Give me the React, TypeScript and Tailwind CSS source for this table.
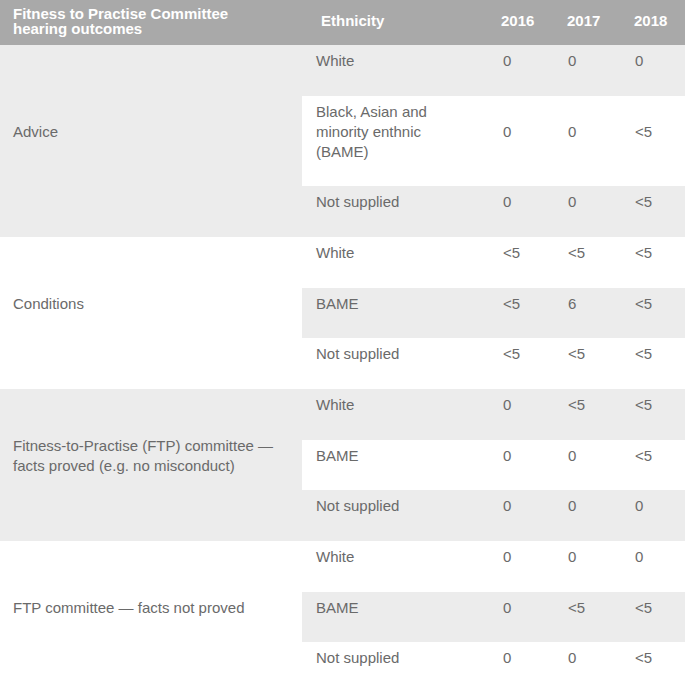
const groups = [
  {
    outcome: 'Advice',
    rows: [
      { ethnicity: 'White', values: ['0', '0', '0'] },
      { ethnicity: 'Black, Asian and minority enthnic (BAME)', values: ['0', '0', '<5'] },
      { ethnicity: 'Not supplied', values: ['0', '0', '<5'] },
    ],
  },
  {
    outcome: 'Conditions',
    rows: [
      { ethnicity: 'White', values: ['<5', '<5', '<5'] },
      { ethnicity: 'BAME', values: ['<5', '6', '<5'] },
      { ethnicity: 'Not supplied', values: ['<5', '<5', '<5'] },
    ],
  },
  {
    outcome: 'Fitness-to-Practise (FTP) committee — facts proved (e.g. no misconduct)',
    rows: [
      { ethnicity: 'White', values: ['0', '<5', '<5'] },
      { ethnicity: 'BAME', values: ['0', '0', '<5'] },
      { ethnicity: 'Not supplied', values: ['0', '0', '0'] },
    ],
  },
  {
    outcome: 'FTP committee — facts not proved',
    rows: [
      { ethnicity: 'White', values: ['0', '0', '0'] },
      { ethnicity: 'BAME', values: ['0', '<5', '<5'] },
      { ethnicity: 'Not supplied', values: ['0', '0', '<5'] },
    ],
  },
];

const cols = 'grid grid-cols-[302px_187px_65px_67px_64px]';
const cell = 'flex items-center pt-[6px] pb-[24.67px]';

const App = () => {
  return (
    <div
      className="w-[685px] bg-white text-[15px] leading-[20px] text-[#6a6a6a]"
      style={{ fontFamily: '"Liberation Sans", Arial, sans-serif' }}
    >
      {/* Header */}
      <div className={`${cols} h-[45px] bg-[#a9a9a9] font-bold leading-[15px] text-white`}>
        <div className="flex items-center pb-[4px] pl-[13px] pr-[40px]">
          Fitness to Practise Committee hearing outcomes
        </div>
        <div className="flex items-center pb-[4px] pl-[19px]">Ethnicity</div>
        <div className="flex items-center pb-[4px] pl-[12px]">2016</div>
        <div className="flex items-center pb-[4px] pl-[13px]">2017</div>
        <div className="flex items-center pb-[4px] pl-[13px]">2018</div>
      </div>

      {/* Body groups */}
      {groups.map((group, gi) => {
        const shaded = gi % 2 === 0;
        return (
          <div key={group.outcome} className={`${cols} ${shaded ? 'bg-[#ececec]' : 'bg-white'}`}>
            <div className={`${cell} row-span-3 pl-[13px] pr-[13px]`}>{group.outcome}</div>
            {group.rows.map((row, ri) => {
              const alt = ri === 1 ? (shaded ? 'bg-white' : 'bg-[#ececec]') : '';
              return [
                <div key={`${ri}-e`} className={`${cell} ${alt} pl-[14px] pr-[14px]`}>
                  {row.ethnicity}
                </div>,
                <div key={`${ri}-a`} className={`${cell} ${alt} pl-[14px]`}>{row.values[0]}</div>,
                <div key={`${ri}-b`} className={`${cell} ${alt} pl-[14px]`}>{row.values[1]}</div>,
                <div key={`${ri}-c`} className={`${cell} ${alt} pl-[14px]`}>{row.values[2]}</div>,
              ];
            })}
          </div>
        );
      })}
    </div>
  );
};

export default App;
